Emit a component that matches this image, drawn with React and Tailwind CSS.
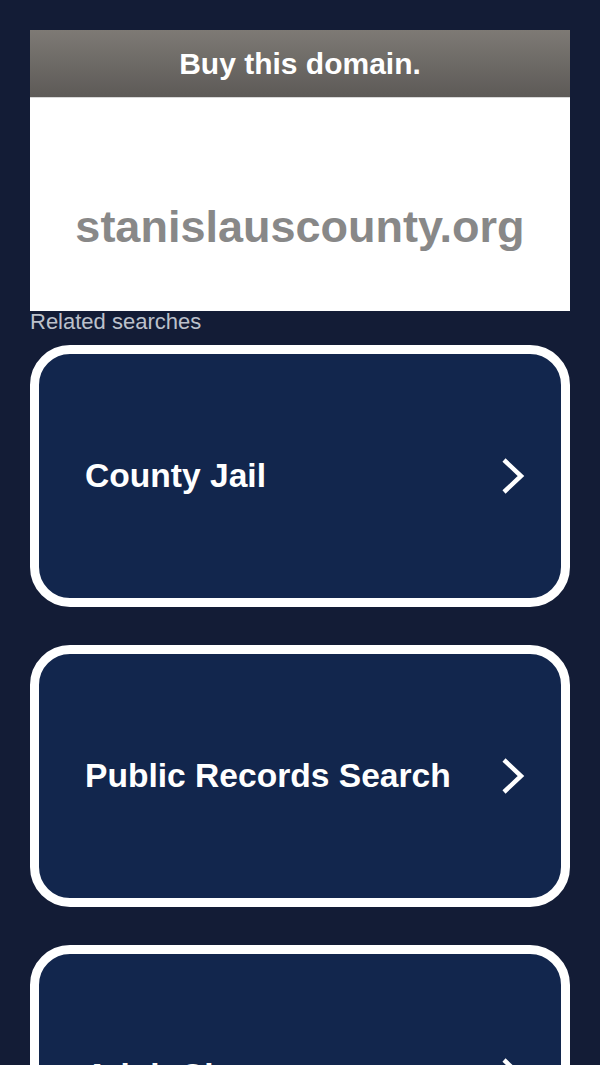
import React from "react";

function Chevron() {
  return (
    <svg width="28" height="38" viewBox="0 0 28 38" fill="none" className="shrink-0">
      <path d="M5 3 L22 19 L5 35" stroke="white" strokeWidth="4.5" strokeLinecap="butt" strokeLinejoin="miter" />
    </svg>
  );
}

function Card({ label }) {
  return (
    <div className="h-[262px] rounded-[40px] border-[9px] border-white bg-[#12264d] flex items-center justify-between pl-[46px] pr-[34px]">
      <span className="text-white font-bold text-[33.6px] leading-none">{label}</span>
      <Chevron />
    </div>
  );
}

export default function App() {
  return (
    <div
      className="min-h-[1065px] bg-[#131c36] px-[30px] pt-[30px]"
      style={{ fontFamily: '"Liberation Sans", Arial, sans-serif' }}
    >
      <div className="h-[67px] bg-gradient-to-b from-[#7e7a75] to-[#5d5a57] flex items-center justify-center">
        <span className="text-white font-bold text-[30px] leading-none">Buy this domain.</span>
      </div>
      <div className="h-[214px] bg-white flex items-center justify-center border-t border-[#d8d8d8]">
        <span className="text-[#888888] font-bold text-[45px] leading-none pt-[44px]">stanislauscounty.org</span>
      </div>
      <div className="text-[#bcc1cb] text-[22px] leading-none pt-[0px] h-[34px]">Related searches</div>
      <div className="flex flex-col gap-[38px]">
        <Card label="County Jail" />
        <Card label="Public Records Search" />
        <Card label="Adult Charges" />
      </div>
    </div>
  );
}
